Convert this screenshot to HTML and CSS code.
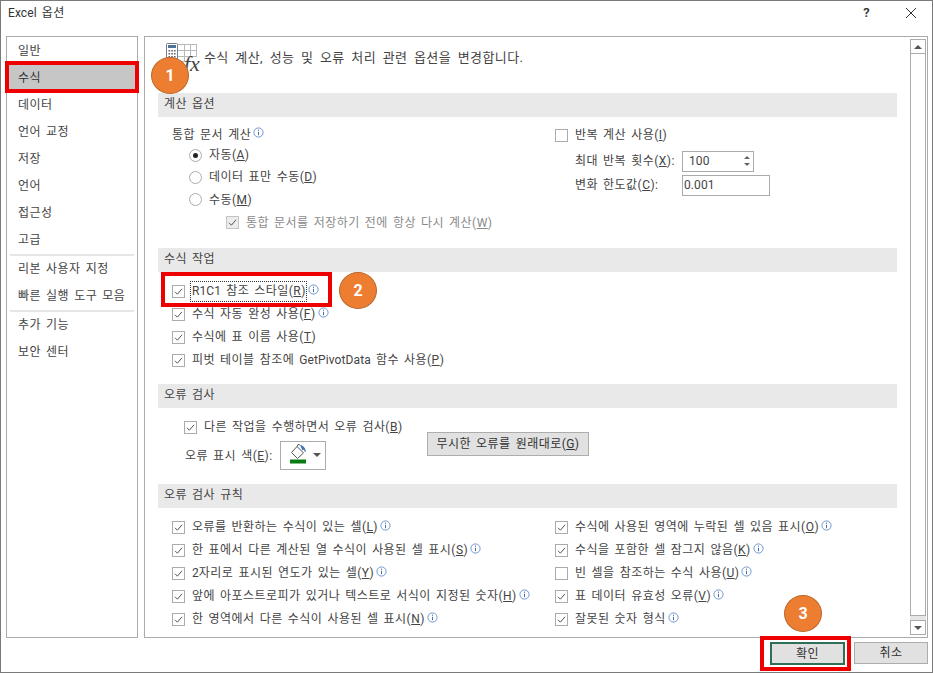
FILE: index.html
```html
<!DOCTYPE html>
<html lang="ko">
<head>
<meta charset="utf-8">
<title>Excel 옵션</title>
<link rel="stylesheet" href="styles.css">
</head>
<body>
<svg class="defs" width="0" height="0">
  <symbol id="check" viewBox="0 0 13 13"><path d="M3 6.800 5.400 9.200 10 3.800" fill="none" stroke="#555" stroke-width="1"/></symbol>
  <symbol id="info" viewBox="0 0 11 11"><circle cx="5.500" cy="5.500" r="4.600" fill="#fff" stroke="#6f97cf" stroke-width="1"/><path d="M5.500 2.600v1.200M5.500 4.800v3.400" stroke="#4a6fa5" stroke-width="1"/></symbol>
</svg>
<div class="window">
  <header class="titlebar">
    <span class="title"><span class="latin">Excel</span> 옵션</span>
    <span class="help">?</span>
    <svg class="close" width="14" height="14" viewBox="0 0 14 14"><path d="M2 2 12 12M12 2 2 12" stroke="#333" stroke-width="1"/></svg>
  </header>
  <main class="main">
    <nav class="nav">
      <div class="nav-item">일반</div>
      <div class="nav-item active">수식</div>
      <div class="nav-item">데이터</div>
      <div class="nav-item">언어 교정</div>
      <div class="nav-item">저장</div>
      <div class="nav-item">언어</div>
      <div class="nav-item">접근성</div>
      <div class="nav-item">고급</div>
      <div class="nav-divider"></div>
      <div class="nav-item">리본 사용자 지정</div>
      <div class="nav-item">빠른 실행 도구 모음</div>
      <div class="nav-divider"></div>
      <div class="nav-item">추가 기능</div>
      <div class="nav-item">보안 센터</div>
    </nav>
    <section class="panel">
      <div class="content">
        <div class="page-head">
          <div class="page-icon">
            <svg width="32" height="28" viewBox="0 0 32 28">
              <path d="M11.500 1.500H31M11.500 7.500H31M11.500 13.500H31M11.500 18.500H21M18.500 1.500V19M24.500 1.500V14M30.500 1.500V14" stroke="#b9b9b9" fill="none"/>
              <rect x="0.500" y="0.500" width="11" height="17" rx="1" fill="#fff" stroke="#6f7f8f"/>
              <rect x="2" y="2" width="8" height="3" fill="#4f7396"/>
              <path d="M2.500 7h1.600v1.600H2.500zM5.300 7h1.600v1.600H5.300zM8 7h1.600v1.600H8zM2.500 10h1.600v1.600H2.500zM5.300 10h1.600v1.600H5.300zM8 10h1.600v1.600H8zM2.500 13h1.600v1.600H2.500zM5.300 13h1.600v1.600H5.300zM8 13h1.600v1.600H8z" fill="#666"/>
            </svg>
            <span class="fx">fx</span>
          </div>
          <h1 class="page-title">수식 계산, 성능 및 오류 처리 관련 옵션을 변경합니다.</h1>
        </div>

        <h2 class="bar">계산 옵션</h2>
        <div class="body body-calc two-col">
          <div class="col">
            <div class="row-c first">통합 문서 계산<svg class="i"><use href="#info"/></svg></div>
            <div class="row-c indent-radio"><span class="radio on"></span>자동(<u>A</u>)</div>
            <div class="row-c indent-radio"><span class="radio"></span>데이터 표만 수동(<u>D</u>)</div>
            <div class="row-c indent-radio tall"><span class="radio"></span>수동(<u>M</u>)</div>
            <div class="row-c indent-sub tall muted"><span class="cb dim"><svg><use href="#check"/></svg></span>통합 문서를 저장하기 전에 항상 다시 계산(<u>W</u>)</div>
          </div>
          <div class="col">
            <div class="row-c iter-row"><span class="cb"></span>반복 계산 사용(<u>I</u>)</div>
            <div class="field-row spin-row">
              <span class="field-label">최대 반복 횟수(<u>X</u>):</span>
              <span class="spin"><span class="latin">100</span><span class="arrows"><i class="up"></i><i class="down"></i></span></span>
            </div>
            <div class="field-row">
              <span class="field-label">변화 한도값(<u>C</u>):</span>
              <span class="text-input latin">0.001</span>
            </div>
          </div>
        </div>

        <h2 class="bar">수식 작업</h2>
        <div class="body body-work">
          <div class="row"><span class="cb"><svg><use href="#check"/></svg></span><span class="focus"><span class="latin">R1C1</span> 참조 스타일(<u>R</u>)</span><svg class="i"><use href="#info"/></svg></div>
          <div class="row"><span class="cb"><svg><use href="#check"/></svg></span>수식 자동 완성 사용(<u>F</u>)<svg class="i"><use href="#info"/></svg></div>
          <div class="row"><span class="cb"><svg><use href="#check"/></svg></span>수식에 표 이름 사용(<u>T</u>)</div>
          <div class="row"><span class="cb"><svg><use href="#check"/></svg></span>피벗 테이블 참조에 <span class="latin">GetPivotData</span> 함수 사용(<u>P</u>)</div>
        </div>

        <h2 class="bar">오류 검사</h2>
        <div class="body body-check">
          <div class="check-col">
            <div class="row"><span class="cb"><svg><use href="#check"/></svg></span>다른 작업을 수행하면서 오류 검사(<u>B</u>)</div>
            <div class="color-row">
              <span class="color-label">오류 표시 색(<u>E</u>):</span>
              <span class="color-btn">
                <svg width="18" height="23" viewBox="0 2.500 18 23">
                  <path d="M1.500 11 7 5 13.500 11.500 7.500 17Z" fill="#fff" stroke="#555"/>
                  <path d="M7 5 8 3 10 3.500" fill="none" stroke="#555"/>
                  <path d="M10 3.500c3 0 5.500 3 6 7l-1.500-.5-.5-2-1.500 1Z" fill="#3f78b8"/>
                  <rect x="0" y="18" width="16" height="4" fill="#0a7a12"/>
                </svg>
                <i class="caret"></i>
              </span>
            </div>
          </div>
          <button class="btn reset" type="button">무시한 오류를 원래대로(<u>G</u>)</button>
        </div>

        <h2 class="bar">오류 검사 규칙</h2>
        <div class="body two-col">
          <div class="col">
            <div class="row"><span class="cb"><svg><use href="#check"/></svg></span>오류를 반환하는 수식이 있는 셀(<u>L</u>)<svg class="i"><use href="#info"/></svg></div>
            <div class="row"><span class="cb"><svg><use href="#check"/></svg></span>한 표에서 다른 계산된 열 수식이 사용된 셀 표시(<u>S</u>)<svg class="i"><use href="#info"/></svg></div>
            <div class="row"><span class="cb"><svg><use href="#check"/></svg></span><span class="latin">2</span>자리로 표시된 연도가 있는 셀(<u>Y</u>)<svg class="i"><use href="#info"/></svg></div>
            <div class="row"><span class="cb"><svg><use href="#check"/></svg></span>앞에 아포스트로피가 있거나 텍스트로 서식이 지정된 숫자(<u>H</u>)<svg class="i"><use href="#info"/></svg></div>
            <div class="row"><span class="cb"><svg><use href="#check"/></svg></span>한 영역에서 다른 수식이 사용된 셀 표시(<u>N</u>)<svg class="i"><use href="#info"/></svg></div>
          </div>
          <div class="col">
            <div class="row"><span class="cb"><svg><use href="#check"/></svg></span>수식에 사용된 영역에 누락된 셀 있음 표시(<u>O</u>)<svg class="i"><use href="#info"/></svg></div>
            <div class="row"><span class="cb"><svg><use href="#check"/></svg></span>수식을 포함한 셀 잠그지 않음(<u>K</u>)<svg class="i"><use href="#info"/></svg></div>
            <div class="row"><span class="cb"></span>빈 셀을 참조하는 수식 사용(<u>U</u>)<svg class="i"><use href="#info"/></svg></div>
            <div class="row"><span class="cb"><svg><use href="#check"/></svg></span>표 데이터 유효성 오류(<u>V</u>)<svg class="i"><use href="#info"/></svg></div>
            <div class="row"><span class="cb"><svg><use href="#check"/></svg></span>잘못된 숫자 형식<svg class="i"><use href="#info"/></svg></div>
          </div>
        </div>
      </div>
      <div class="scrollbar">
        <div class="sb-btn"><i class="up-lg"></i></div>
        <div class="sb-thumb"></div>
        <div class="sb-gap"></div>
        <div class="sb-btn"><i class="down-lg"></i></div>
      </div>
    </section>
  </main>
  <footer class="footer">
    <button class="btn ok" type="button">확인</button>
    <button class="btn cancel" type="button">취소</button>
  </footer>
</div>
<div class="mark mark-nav"></div>
<div class="mark mark-r1c1"></div>
<div class="mark mark-ok"></div>
<div class="badge badge-1">1</div>
<div class="badge badge-2">2</div>
<div class="badge badge-3">3</div>
</body>
</html>
```
FILE: styles.css
```css
* { box-sizing: border-box; }
html, body { margin: 0; padding: 0; }
body {
  width: 933px;
  height: 673px;
  position: relative;
  overflow: hidden;
  font: 12px/16px Roboto, "Noto Sans CJK KR", sans-serif;
  letter-spacing: 0.45px;
  word-spacing: 1.7px;
  color: #444;
  background: #fff;
}
.latin { letter-spacing: 0.1px; }
.defs { position: absolute; }
.window {
  width: 933px;
  height: 673px;
  border: 1px solid #7a7a7a;
  display: flex;
  flex-direction: column;
  background: #fff;
}
.titlebar {
  height: 35px;
  flex: none;
  display: flex;
  align-items: flex-start;
  padding: 4px 14px 0 7px;
}
.title { flex: 1; color: #333; }
.help { margin-right: 34px; font-weight: 600; font-size: 13px; color: #333; }
.close { margin-top: 1px; }
.main {
  height: 602px;
  flex: none;
  display: flex;
  gap: 6px;
  padding: 0 4px 0 5px;
}
.nav {
  width: 132px;
  flex: none;
  border: 1px solid #ababab;
  padding: 1px 0 0 0;
}
.nav-item {
  height: 27px;
  line-height: 26px;
  padding-left: 11px;
  margin: 0;
}
.nav-item.active { background: #c6c6c6; color: #333; margin: 0 2px 0 2px; padding-left: 9px; }
.nav-divider { height: 2px; background: #e6e6e6; margin: 0 3px; }
.panel {
  flex: 1;
  min-width: 0;
  border: 1px solid #ababab;
  display: flex;
}
.content { flex: 1; min-width: 0; padding: 0 13px 0 13px; }
.page-head { height: 56px; display: flex; padding: 6px 0 0 8px; }
.page-icon { position: relative; width: 38px; height: 40px; flex: none; }
.fx {
  position: absolute;
  left: 18px;
  top: 8px;
  font: italic 22px/26px "Liberation Serif", serif;
  letter-spacing: 0;
  color: #444;
}
.page-title {
  margin: 6px 0 0 0;
  font-size: 13px;
  line-height: 18px;
  font-weight: 400;
  color: #444;
  letter-spacing: 0.4px;
  word-spacing: 3px;
}
.bar {
  margin: 0;
  height: 24px;
  background: #e9e9e9;
  font-size: 12px;
  font-weight: 400;
  line-height: 23px;
  padding-left: 6px;
  color: #444;
}
.body { padding: 7px 0 0 14px; }
.body-calc { height: 131px; padding-top: 6px; }
.body-work { height: 112px; }
.body-check { height: 76px; display: flex; }
.two-col { display: grid; grid-template-columns: 383px 1fr; }
.row { height: 23px; display: flex; align-items: center; white-space: pre; padding-top: 1px; }
.row-c { height: 22px; display: flex; align-items: center; white-space: pre; }
.row-c.first { height: 21px; padding-top: 2px; }
.row-c.tall { height: 23px; }
.iter-row { margin-top: 1px; }
.indent-radio { padding-left: 17px; }
.indent-sub { padding-left: 54px; }
.muted { color: #8a8a8a; }
.cb {
  width: 13px;
  height: 13px;
  flex: none;
  border: 1px solid #ababab;
  margin-right: 7px;
  background: #fff;
  position: relative;
}
.cb svg { position: absolute; left: -1px; top: -1px; width: 13px; height: 13px; }
.cb.dim { background: #ececec; border-color: #c4c4c4; }
.radio {
  width: 13px;
  height: 13px;
  border: 1px solid #ababab;
  border-radius: 50%;
  margin-right: 7px;
  flex: none;
  position: relative;
  background: #fff;
}
.radio.on::after {
  content: "";
  position: absolute;
  left: 3px;
  top: 3px;
  width: 5px;
  height: 5px;
  border-radius: 50%;
  background: #222;
}
.i { width: 11px; height: 11px; flex: none; margin: -4px 0 0 2px; }
u { text-underline-offset: 1px; }
.focus { outline: 1px dotted #333; padding: 1px 0 2px 1px; margin-left: -1px; }
.field-row { display: flex; align-items: center; height: 24px; padding-left: 20px; }
.spin-row { margin-top: 3px; }
.field-label { width: 107px; flex: none; }
.spin, .text-input {
  height: 21px;
  border: 1px solid #ababab;
  display: flex;
  align-items: center;
}
.spin { width: 72px; padding-left: 6px; justify-content: space-between; }
.text-input { width: 88px; padding-left: 1px; }
.arrows { display: flex; flex-direction: column; gap: 4px; margin-right: 3px; }
.arrows i { display: block; width: 0; height: 0; border-left: 3px solid transparent; border-right: 3px solid transparent; }
.arrows .up { border-bottom: 3px solid #666; }
.arrows .down { border-top: 3px solid #666; }
.check-col { width: 255px; padding-left: 12px; flex: none; }
.color-row { display: flex; align-items: center; margin-top: 3px; padding-left: 1px; }
.color-label { width: 95px; flex: none; }
.color-btn {
  width: 46px;
  height: 29px;
  border: 1px solid #ababab;
  display: flex;
  align-items: center;
  gap: 5px;
  padding-left: 9px;
}
.caret { width: 0; height: 0; border-left: 4px solid transparent; border-right: 4px solid transparent; border-top: 4px solid #555; margin-top: -1px; }
.btn {
  font: inherit;
  letter-spacing: inherit;
  word-spacing: inherit;
  color: #333;
  background: #e1e1e1;
  border: 1px solid #adadad;
  padding: 0;
  display: block;
}
.reset { width: 162px; height: 24px; margin: 17px 0 0 0; }
.scrollbar { width: 16px; flex: none; margin: 2px 1px 2px 0; display: flex; flex-direction: column; }
.sb-btn {
  height: 15px;
  flex: none;
  border: 1px solid #ababab;
  display: flex;
  align-items: center;
  justify-content: center;
}
.sb-thumb { flex: 1; border: 1px solid #ababab; border-top: none; }
.sb-gap { height: 4px; background: #e6e6e6; flex: none; }
.up-lg { width: 0; height: 0; border-left: 4px solid transparent; border-right: 4px solid transparent; border-bottom: 4px solid #555; }
.down-lg { width: 0; height: 0; border-left: 4px solid transparent; border-right: 4px solid transparent; border-top: 4px solid #555; }
.footer { flex: 1; display: flex; justify-content: flex-end; gap: 9px; padding: 4px 4px 0 0; }
.ok { width: 75px; height: 23px; border: 2px solid #2f6f55; }
.cancel { width: 74px; height: 22px; }
.mark { position: absolute; border: 4px solid #ee0000; }
.mark-nav { left: 5px; top: 61px; width: 134px; height: 32px; }
.mark-r1c1 { left: 161px; top: 272px; width: 171px; height: 35px; }
.mark-ok { left: 760px; top: 636px; width: 91px; height: 35px; }
.badge {
  position: absolute;
  width: 38px;
  height: 37px;
  border-radius: 50%;
  background: #ed7d31;
  border: 1px solid #b9692f;
  color: #fff;
  font-weight: 700;
  font-size: 16px;
  line-height: 35px;
  letter-spacing: 0;
  text-align: center;
}
.badge-1 { left: 151px; top: 57px; }
.badge-2 { left: 339px; top: 272px; }
.badge-3 { left: 784px; top: 595px; }
```
